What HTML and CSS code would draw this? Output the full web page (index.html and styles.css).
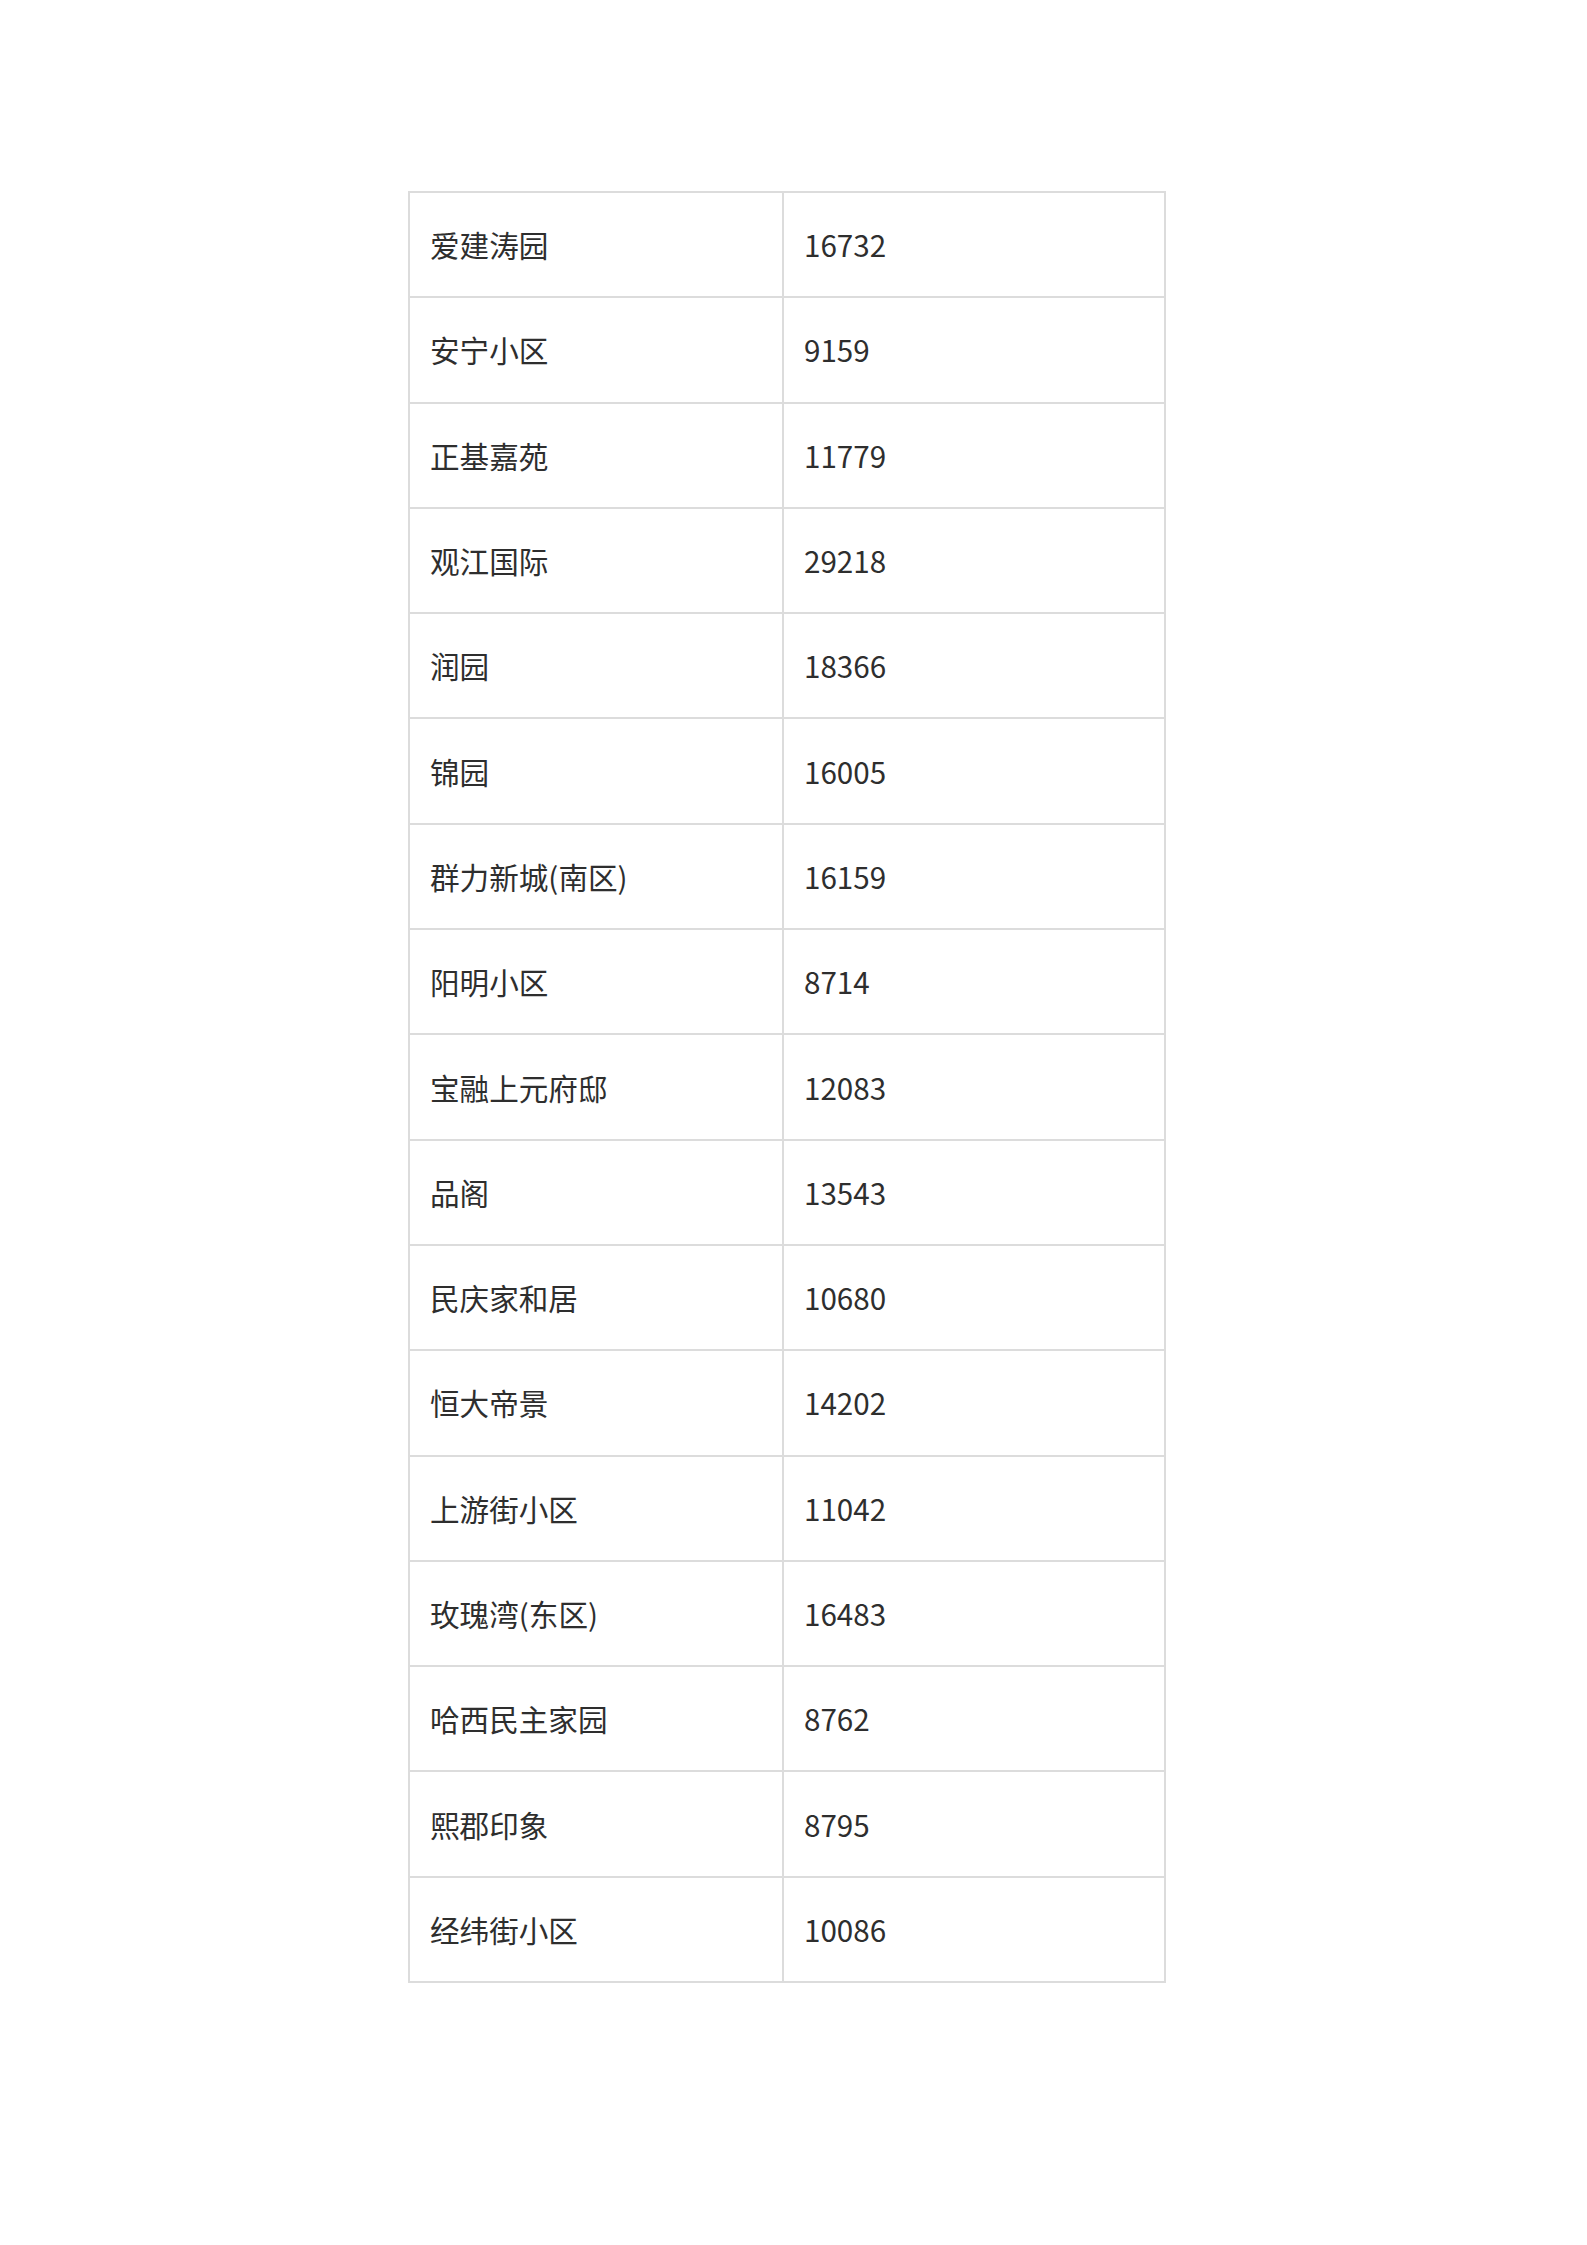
FILE: index.html
```html
<!DOCTYPE html>
<html lang="zh-CN">
<head>
<meta charset="utf-8">
<title>小区</title>
<link rel="stylesheet" href="styles.css">
</head>
<body>
<div class="page">
  <div class="table">
    <div class="cell">爱建涛园</div><div class="cell">16732</div>
    <div class="cell">安宁小区</div><div class="cell">9159</div>
    <div class="cell">正基嘉苑</div><div class="cell">11779</div>
    <div class="cell">观江国际</div><div class="cell">29218</div>
    <div class="cell">润园</div><div class="cell">18366</div>
    <div class="cell">锦园</div><div class="cell">16005</div>
    <div class="cell">群力新城(南区)</div><div class="cell">16159</div>
    <div class="cell">阳明小区</div><div class="cell">8714</div>
    <div class="cell">宝融上元府邸</div><div class="cell">12083</div>
    <div class="cell">品阁</div><div class="cell">13543</div>
    <div class="cell">民庆家和居</div><div class="cell">10680</div>
    <div class="cell">恒大帝景</div><div class="cell">14202</div>
    <div class="cell">上游街小区</div><div class="cell">11042</div>
    <div class="cell">玫瑰湾(东区)</div><div class="cell">16483</div>
    <div class="cell">哈西民主家园</div><div class="cell">8762</div>
    <div class="cell">熙郡印象</div><div class="cell">8795</div>
    <div class="cell">经纬街小区</div><div class="cell">10086</div>
  </div>
</div>
</body>
</html>
```
FILE: styles.css
```css
html, body {
  margin: 0;
  padding: 0;
  background: #ffffff;
}
.page {
  padding: 191px 0 0 408px;
}
.table {
  display: grid;
  grid-template-columns: 372px 380px;
  grid-auto-rows: 103.3px;
  gap: 2px;
  width: 754px;
  border: 2px solid #dcdcdc;
  background: #dcdcdc;
  font-family: "Noto Sans CJK SC", "Microsoft YaHei", sans-serif;
  font-size: 29.6px;
  color: #2e2e2e;
}
.cell {
  background: #ffffff;
  display: flex;
  align-items: center;
  padding-left: 20px;
}
```
